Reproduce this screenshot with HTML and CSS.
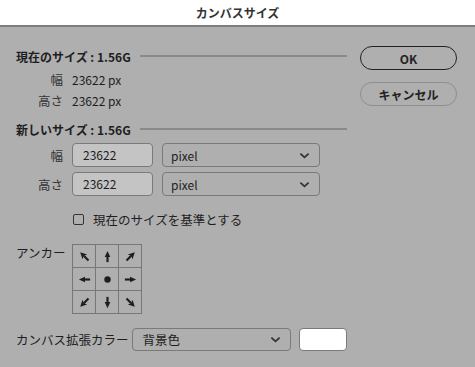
FILE: index.html
```html
<!DOCTYPE html>
<html lang="ja">
<head>
    <meta charset="UTF-8">
    <title>カンバスサイズ</title>
    <link rel="stylesheet" href="styles.css">
</head>
<body>
    <div class="titlebar">カンバスサイズ</div>

    <div class="dialog">
        <div class="main">
            <div class="section-head">
                <span>現在のサイズ : 1.56G</span>
                <div class="rule"></div>
            </div>
            <div class="info">
                <div class="row"><span class="label">幅</span><span>23622 px</span></div>
                <div class="row"><span class="label">高さ</span><span>23622 px</span></div>
            </div>

            <div class="section-head second">
                <span>新しいサイズ : 1.56G</span>
                <div class="rule"></div>
            </div>
            <div class="fields">
                <div class="field-row">
                    <span class="label">幅</span>
                    <div class="input">23622</div>
                    <div class="select unit">pixel<svg class="chev" viewBox="0 0 12 7"><path d="M1.5 1.5 L6 5.5 L10.5 1.5"/></svg></div>
                </div>
                <div class="field-row">
                    <span class="label">高さ</span>
                    <div class="input">23622</div>
                    <div class="select unit">pixel<svg class="chev" viewBox="0 0 12 7"><path d="M1.5 1.5 L6 5.5 L10.5 1.5"/></svg></div>
                </div>
            </div>

            <label class="check-row">
                <span class="checkbox"></span>
                <span>現在のサイズを基準とする</span>
            </label>

            <div class="anchor-row">
                <span class="anchor-label">アンカー</span>
                <div class="anchor-grid">
                    <div class="cell"><svg viewBox="0 0 16 16"><g transform="rotate(-45 8 8)"><path class="shaft" d="M8 7 V14"/><path class="head" d="M8 1.5 L11.5 8.5 L8 7 L4.5 8.5 Z"/></g></svg></div>
                    <div class="cell"><svg viewBox="0 0 16 16"><path class="shaft" d="M8 7 V14"/><path class="head" d="M8 2 L11 8.5 L5 8.5 Z"/></svg></div>
                    <div class="cell"><svg viewBox="0 0 16 16"><g transform="rotate(45 8 8)"><path class="shaft" d="M8 7 V14"/><path class="head" d="M8 1.5 L11.5 8.5 L8 7 L4.5 8.5 Z"/></g></svg></div>
                    <div class="cell"><svg viewBox="0 0 16 16"><path class="shaft" d="M7 8 H14"/><path class="head" d="M2 8 L8.5 5 L8.5 11 Z"/></svg></div>
                    <div class="cell"><svg viewBox="0 0 16 16"><circle cx="8" cy="8" r="3.4"/></svg></div>
                    <div class="cell"><svg viewBox="0 0 16 16"><path class="shaft" d="M2 8 H9"/><path class="head" d="M14 8 L7.5 5 L7.5 11 Z"/></svg></div>
                    <div class="cell"><svg viewBox="0 0 16 16"><g transform="rotate(-135 8 8)"><path class="shaft" d="M8 7 V14"/><path class="head" d="M8 1.5 L11.5 8.5 L8 7 L4.5 8.5 Z"/></g></svg></div>
                    <div class="cell"><svg viewBox="0 0 16 16"><path class="shaft" d="M8 2 V9"/><path class="head" d="M8 14 L11 7.5 L5 7.5 Z"/></svg></div>
                    <div class="cell"><svg viewBox="0 0 16 16"><g transform="rotate(135 8 8)"><path class="shaft" d="M8 7 V14"/><path class="head" d="M8 1.5 L11.5 8.5 L8 7 L4.5 8.5 Z"/></g></svg></div>
                </div>
            </div>

            <div class="color-row">
                <span>カンバス拡張カラー</span>
                <div class="select color-select">背景色<svg class="chev" viewBox="0 0 12 7"><path d="M1.5 1.5 L6 5.5 L10.5 1.5"/></svg></div>
                <div class="swatch"></div>
            </div>
        </div>

        <div class="buttons">
            <button class="btn primary">OK</button>
            <button class="btn">キャンセル</button>
        </div>
    </div>
</body>
</html>
```

FILE: styles.css
```css
* {
    margin: 0;
    padding: 0;
    box-sizing: border-box;
}

body {
    width: 475px;
    height: 367px;
    overflow: hidden;
    background: #afafaf;
    font-family: "Noto Sans CJK JP", "Noto Sans", sans-serif;
    font-size: 12px;
    color: #1e1e1e;
}

.titlebar {
    height: 27px;
    background: #fff;
    border-bottom: 2px solid #7e7e7e;
    text-align: center;
    line-height: 25px;
    font-weight: bold;
    font-size: 12px;
    color: #333;
}

.dialog {
    display: flex;
    gap: 13px;
    padding: 19px 0 0 16px;
}

.main {
    width: 331px;
}

.section-head {
    display: flex;
    align-items: center;
    height: 20px;
    font-weight: bold;
}

.section-head.second {
    margin-top: 8px;
}

.rule {
    flex: 1;
    height: 2px;
    margin-left: 9px;
    background: #8a8a8a;
}

.info {
    margin-top: 3px;
}

.row {
    display: flex;
    align-items: center;
    height: 21px;
    gap: 9px;
}

.label {
    display: flex;
    justify-content: flex-end;
    width: 47px;
    flex: none;
    font-size: 12.5px;
    color: #333;
}

.fields {
    margin-top: 4px;
    display: flex;
    flex-direction: column;
    gap: 5px;
}

.field-row {
    display: flex;
    align-items: center;
    gap: 9px;
}

.input {
    width: 81px;
    height: 24px;
    line-height: 22px;
    padding-left: 10px;
    background: #c4c4c4;
    border: 1px solid #7a7a7a;
    border-radius: 4px;
}

.select {
    display: flex;
    align-items: center;
    justify-content: space-between;
    height: 24px;
    border: 1px solid #7a7a7a;
    border-radius: 4px;
    padding: 0 9px 0 8px;
}

.unit {
    width: 158px;
}

.chev {
    width: 11px;
    height: 7px;
}

.chev path {
    fill: none;
    stroke: #333;
    stroke-width: 2;
}

.check-row {
    display: flex;
    align-items: center;
    gap: 9px;
    height: 22px;
    margin-top: 12px;
    padding-left: 57px;
    font-size: 12.5px;
}

.checkbox {
    width: 11px;
    height: 11px;
    border: 1px solid #333;
    border-radius: 2px;
}

.anchor-row {
    display: flex;
    margin-top: 8px;
}

.anchor-label {
    width: 56px;
    padding-top: 6px;
    line-height: 18px;
    font-size: 12.5px;
}

.anchor-grid {
    display: grid;
    grid-template-columns: repeat(3, 23px);
    grid-template-rows: repeat(3, 23px);
    margin-top: 6px;
    border-top: 1px solid #777;
    border-left: 1px solid #777;
}

.cell {
    display: flex;
    align-items: center;
    justify-content: center;
    border-right: 1px solid #777;
    border-bottom: 1px solid #777;
}

.cell svg {
    width: 15px;
    height: 15px;
}

.shaft {
    stroke: #1e1e1e;
    stroke-width: 2.3;
    fill: none;
}

.head,
.cell circle {
    fill: #1e1e1e;
}

.color-row {
    display: flex;
    align-items: center;
    margin-top: 14px;
    font-size: 12.5px;
}

.color-row > span {
    width: 116px;
}

.color-select {
    width: 160px;
    height: 23px;
    padding-left: 10px;
}

.swatch {
    width: 48px;
    height: 23px;
    margin-left: 8px;
    background: #fff;
    border: 1px solid #7a7a7a;
    border-radius: 4px;
}

.buttons {
    display: flex;
    flex-direction: column;
    gap: 12px;
}

.btn {
    width: 97px;
    height: 24px;
    border-radius: 12px;
    background: transparent;
    border: 1px solid #8e8e8e;
    font-family: inherit;
    font-size: 12px;
    font-weight: bold;
    color: #222;
}

.btn.primary {
    border: 1.5px solid #222;
}
```
